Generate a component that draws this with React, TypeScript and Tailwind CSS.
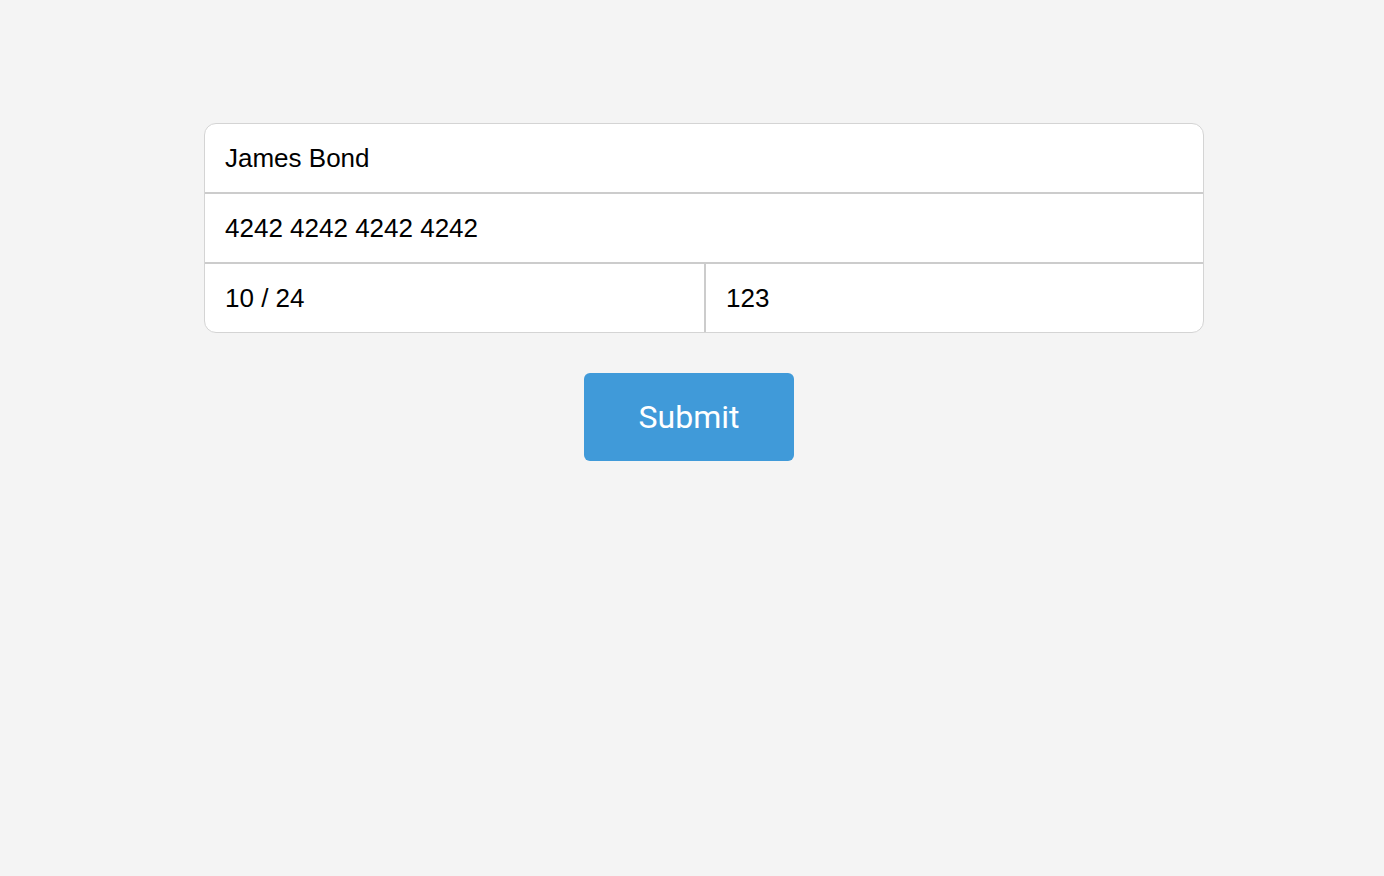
export default function App() {
  return (
    <div className="min-h-[876px] bg-[#f4f4f4] pt-[123px] pl-[204px]">
      <div className="w-[1000px] overflow-hidden rounded-[12px] border border-[#d4d4d4] bg-white font-['Liberation_Sans',Arial,sans-serif] text-[26px] text-black">
        <div className="flex h-[70px] items-center border-b-2 border-[#cccccc] px-[20px]">James Bond</div>
        <div className="flex h-[70px] items-center border-b-2 border-[#cccccc] px-[20px]">4242 4242 4242 4242</div>
        <div className="flex h-[68px]">
          <div className="flex w-[501px] items-center border-r-2 border-[#cccccc] px-[20px]">10 / 24</div>
          <div className="flex flex-1 items-center px-[20px]">123</div>
        </div>
      </div>
      <button className="ml-[380px] mt-[40px] flex h-[88px] w-[210px] items-center justify-center rounded-[6px] bg-[#409ad9] font-['Roboto',sans-serif] text-[32px] text-white">
        Submit
      </button>
    </div>
  );
}
